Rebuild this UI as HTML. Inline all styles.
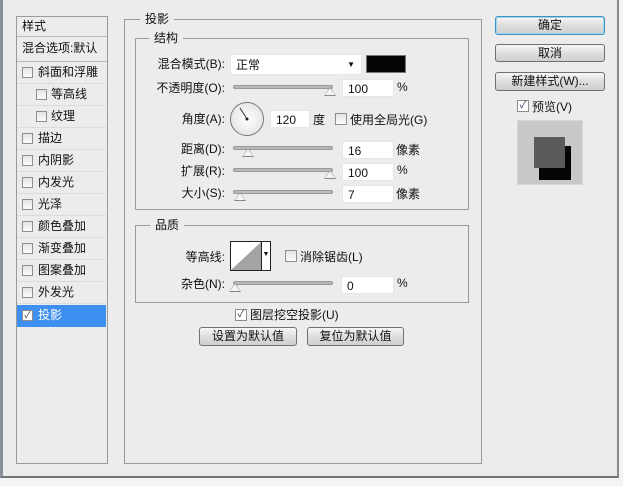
<!DOCTYPE html><html><head><meta charset="utf-8"><style>
*{box-sizing:border-box;margin:0;padding:0}
body{width:623px;height:486px;background:#f4f4f4;position:relative;overflow:hidden;font-family:"Liberation Sans","Noto Sans CJK SC",sans-serif;font-size:12px;color:#111}
.a{position:absolute}
.dlg{left:0;top:0;width:619px;height:478px;background:#ececed;border-left:3px solid #8a9099;border-bottom:2px solid #6f7378;border-right:2px solid #8a8a8a}
.box{border:1px solid #9a9a9a}
.row{left:17px;width:89px;height:22px;border-bottom:1px solid #dcdcdc;line-height:21px;padding-left:21px}
.cb{width:11px;height:11px;border:1px solid #8e8e8e;background:linear-gradient(#e4e4e4,#fbfbfb)}
.row .cb{position:absolute;left:5px;top:5px}
.lbl{text-align:right;width:100px;line-height:16px}
.in{background:#fff;height:18px;line-height:18px;padding-left:5px;border:1px solid #e6e6e6}
.sl{height:4px;background:#b9b9b9;border:1px solid #999;border-radius:2px}
.th{width:0;height:0;border-left:6px solid transparent;border-right:6px solid transparent;border-bottom:9px solid #888}
.th:after{content:"";position:absolute;left:-5px;top:1px;border-left:5px solid transparent;border-right:5px solid transparent;border-bottom:7px solid #f4f4f4}
.btn{border:1px solid #707070;border-radius:3px;background:linear-gradient(#f6f6f6,#dedede 50%,#cfcfcf);text-align:center;line-height:16px}
.leg{background:#ececed;padding:0 5px}
</style></head><body>
<div class="a dlg"></div>
<!-- left panel -->
<div class="a box" style="left:16px;top:16px;width:92px;height:448px;background:#ececed"></div>
<div class="a" style="left:22px;top:17px;line-height:18px">样式</div>
<div class="a" style="left:17px;top:36px;width:90px;border-top:1px solid #bbb"></div>
<div class="a" style="left:22px;top:39px;line-height:18px">混合选项:默认</div>
<div class="a" style="left:17px;top:61px;width:90px;border-top:1px solid #bbb"></div>
<div class="a row" style="top:62px"><span class="cb"></span>斜面和浮雕</div>
<div class="a row" style="top:84px;padding-left:34px"><span class="cb" style="left:19px"></span>等高线</div>
<div class="a row" style="top:106px;padding-left:34px"><span class="cb" style="left:19px"></span>纹理</div>
<div class="a row" style="top:128px"><span class="cb"></span>描边</div>
<div class="a row" style="top:150px"><span class="cb"></span>内阴影</div>
<div class="a row" style="top:172px"><span class="cb"></span>内发光</div>
<div class="a row" style="top:194px"><span class="cb"></span>光泽</div>
<div class="a row" style="top:216px"><span class="cb"></span>颜色叠加</div>
<div class="a row" style="top:238px"><span class="cb"></span>渐变叠加</div>
<div class="a row" style="top:260px"><span class="cb"></span>图案叠加</div>
<div class="a row" style="top:282px"><span class="cb"></span>外发光</div>
<div class="a row" style="top:305px;background:#3d8ff0;color:#fff;border:none"><span class="cb" style="background:#fff;font-size:9px;line-height:9px;color:#334;text-align:center">✓</span>投影</div>
<!-- middle -->
<div class="a box" style="left:124px;top:19px;width:358px;height:445px"></div>
<div class="a leg" style="left:140px;top:10px;line-height:18px">投影</div>
<div class="a box" style="left:135px;top:38px;width:334px;height:172px"></div>
<div class="a leg" style="left:149px;top:29px;line-height:18px">结构</div>
<div class="a lbl" style="left:125px;top:56px">混合模式(B):</div>
<div class="a in" style="left:230px;top:54px;width:132px;height:21px;line-height:20px">正常<span style="position:absolute;right:6px;top:0;font-size:8px">▼</span></div>
<div class="a" style="left:366px;top:55px;width:40px;height:18px;background:#050505;border:1px solid #777"></div>
<div class="a lbl" style="left:125px;top:80px">不透明度(O):</div>
<div class="a sl" style="left:233px;top:85px;width:100px"></div>
<div class="a th" style="left:324px;top:87px"></div>
<div class="a in" style="left:342px;top:79px;width:52px">100</div>
<div class="a" style="left:397px;top:80px">%</div>
<div class="a lbl" style="left:125px;top:111px">角度(A):</div>
<div class="a" style="left:230px;top:102px;width:34px;height:34px;border:1px solid #777;border-radius:50%;background:radial-gradient(#fff,#ddd)"></div>
<svg class="a" style="left:230px;top:102px" width="34" height="34"><line x1="17" y1="17" x2="10" y2="6" stroke="#333" stroke-width="1"/><circle cx="17" cy="17" r="1.5" fill="#222"/></svg>
<div class="a in" style="left:270px;top:110px;width:40px">120</div>
<div class="a" style="left:313px;top:111px">度</div>
<div class="a cb" style="left:335px;top:113px;width:12px;height:12px"></div>
<div class="a" style="left:350px;top:111px">使用全局光(G)</div>
<div class="a lbl" style="left:125px;top:141px">距离(D):</div>
<div class="a sl" style="left:233px;top:146px;width:100px"></div>
<div class="a th" style="left:242px;top:148px"></div>
<div class="a in" style="left:342px;top:141px;width:52px">16</div>
<div class="a" style="left:396px;top:141px">像素</div>
<div class="a lbl" style="left:125px;top:163px">扩展(R):</div>
<div class="a sl" style="left:233px;top:168px;width:100px"></div>
<div class="a th" style="left:324px;top:170px"></div>
<div class="a in" style="left:342px;top:163px;width:52px">100</div>
<div class="a" style="left:397px;top:163px">%</div>
<div class="a lbl" style="left:125px;top:185px">大小(S):</div>
<div class="a sl" style="left:233px;top:190px;width:100px"></div>
<div class="a th" style="left:234px;top:192px"></div>
<div class="a in" style="left:342px;top:185px;width:52px">7</div>
<div class="a" style="left:396px;top:185px">像素</div>
<div class="a box" style="left:135px;top:225px;width:334px;height:78px"></div>
<div class="a leg" style="left:150px;top:216px;line-height:18px">品质</div>
<div class="a lbl" style="left:125px;top:249px">等高线:</div>
<div class="a" style="left:230px;top:241px;width:41px;height:30px;border:1px solid #222;background:#fff"></div>
<svg class="a" style="left:231px;top:242px" width="30" height="28"><polygon points="0,28 30,0 30,28" fill="#a4a4a4"/></svg>
<div class="a" style="left:261px;top:242px;width:9px;height:28px;border-left:1px solid #222;font-size:7px;line-height:26px;text-align:center">▼</div>
<div class="a cb" style="left:285px;top:250px;width:12px;height:12px"></div>
<div class="a" style="left:300px;top:248px">消除锯齿(L)</div>
<div class="a lbl" style="left:125px;top:276px">杂色(N):</div>
<div class="a sl" style="left:233px;top:281px;width:100px"></div>
<div class="a th" style="left:229px;top:283px"></div>
<div class="a in" style="left:341px;top:276px;width:53px">0</div>
<div class="a" style="left:397px;top:276px">%</div>
<div class="a cb" style="left:235px;top:309px;width:12px;height:12px;background:#fff;font-size:10px;line-height:10px;text-align:center;color:#335">✓</div>
<div class="a" style="left:250px;top:306px">图层挖空投影(U)</div>
<div class="a btn" style="left:199px;top:327px;width:98px;height:19px">设置为默认值</div>
<div class="a btn" style="left:307px;top:327px;width:97px;height:19px">复位为默认值</div>
<!-- right -->
<div class="a btn" style="left:495px;top:16px;width:110px;height:19px;border-color:#3c90c2;box-shadow:inset 0 0 0 1px #9fd6f2">确定</div>
<div class="a btn" style="left:495px;top:44px;width:110px;height:18px">取消</div>
<div class="a btn" style="left:495px;top:72px;width:110px;height:19px">新建样式(W)...</div>
<div class="a cb" style="left:517px;top:100px;width:12px;height:12px;background:#fff;font-size:10px;line-height:10px;text-align:center;color:#335">✓</div>
<div class="a" style="left:532px;top:98px">预览(V)</div>
<div class="a" style="left:517px;top:120px;width:66px;height:65px;background:#c8c8c8;border:1px solid #d8d8d8"></div>
<div class="a" style="left:539px;top:146px;width:32px;height:34px;background:#050505"></div>
<div class="a" style="left:534px;top:137px;width:31px;height:31px;background:#5a5a5c"></div>
</body></html>
